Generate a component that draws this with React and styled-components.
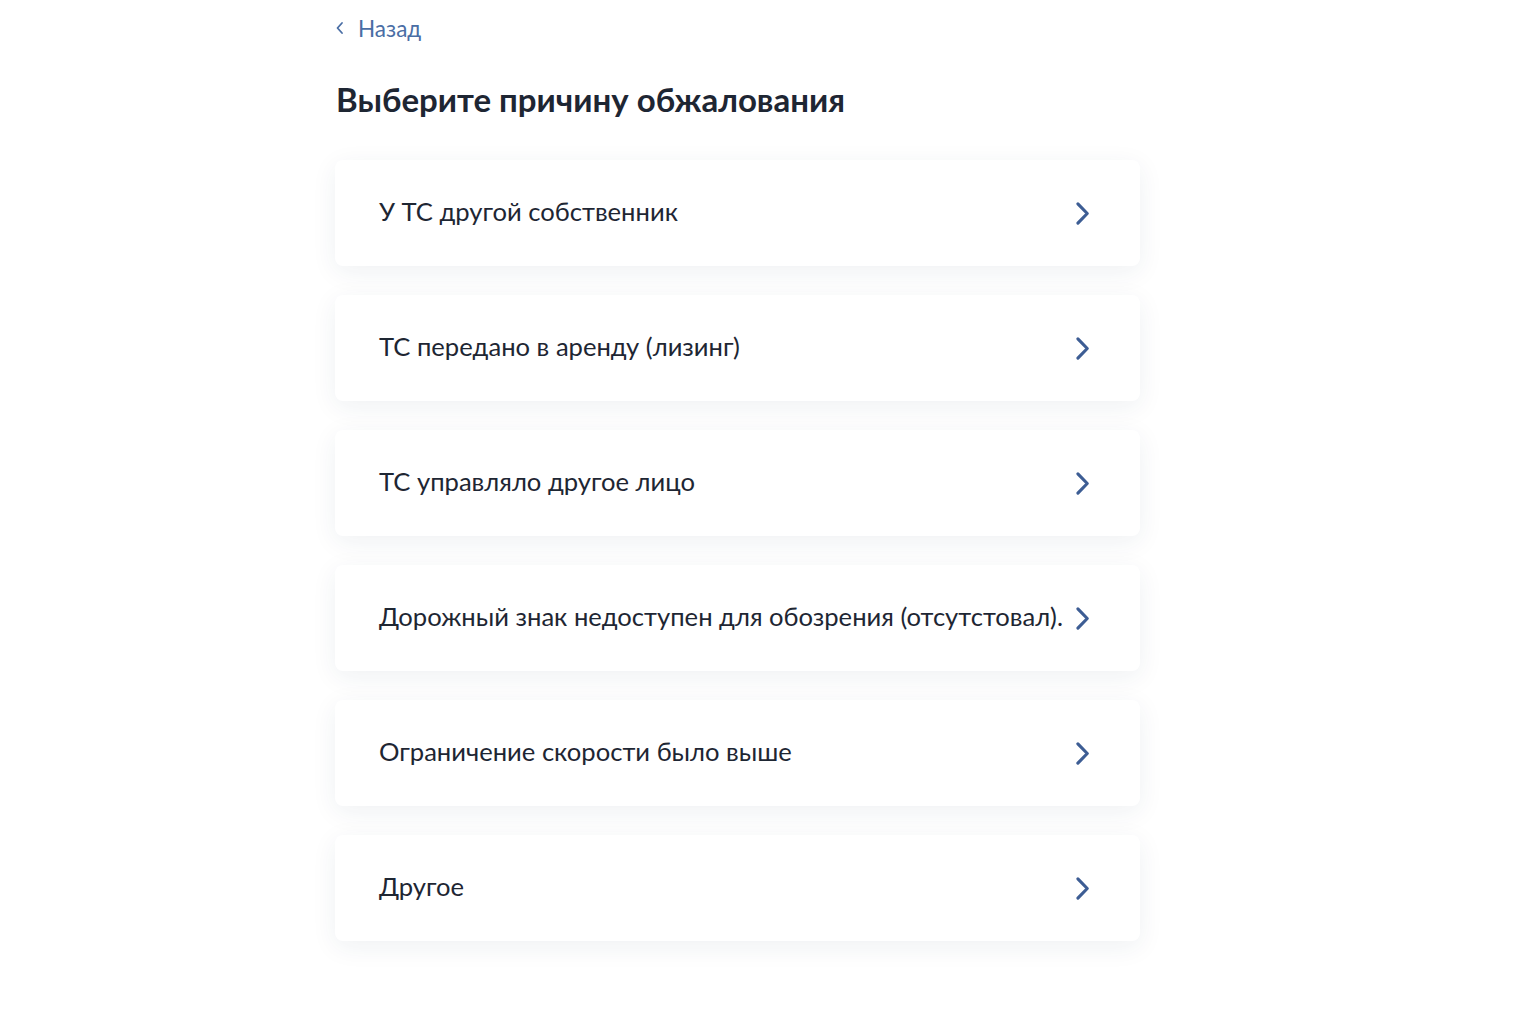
import React from "react";
import styled, { createGlobalStyle } from "styled-components";

const GlobalStyle = createGlobalStyle`
	body {
		margin: 0;
		background: #ffffff;
		font-family: Lato, "Noto Sans", "Liberation Sans", sans-serif;
	}
`;

const Page = styled.div`
	padding: 13px 0 60px 335px;
	width: 805px;
`;

const BackLink = styled.a`
	display: inline-flex;
	align-items: center;
	gap: 13px;
	color: #4a6ea5;
	font-size: 22.5px;
	text-decoration: none;
	cursor: pointer;
	height: 30px;
`;

const Title = styled.h1`
	margin: 36px 0 0 1px;
	font-size: 33px;
	font-weight: 700;
	color: #1e2633;
	line-height: 40px;
`;

const List = styled.div`
	display: flex;
	flex-direction: column;
	gap: 29px;
	margin-top: 41px;
`;

const Card = styled.button`
	display: flex;
	align-items: center;
	justify-content: space-between;
	gap: 5px;
	height: 106px;
	padding: 0 50px 0 44px;
	background: #ffffff;
	border: none;
	border-radius: 8px;
	box-shadow: 0 6px 26px rgba(30, 50, 80, 0.07);
	font-family: inherit;
	font-size: 25.6px;
	line-height: 32px;
	color: #1e2633;
	text-align: left;
	cursor: pointer;
`;

const Label = styled.span`
	padding-bottom: 5px;
	white-space: nowrap;
`;

const ChevronSvg = styled.svg`
	flex-shrink: 0;
`;

const Chevron = ({ color = "#3d5d94" }) => (
	<ChevronSvg width="15" height="25" viewBox="5.5 2 9.5 16" fill="none">
		<path d="M7.3 3.8 L13.3 10 L7.3 16.2" stroke={color} strokeWidth="2" strokeLinecap="round" strokeLinejoin="round" />
	</ChevronSvg>
);

const SmallChevron = () => (
	<svg width="10" height="14" viewBox="0 0 10 14" fill="none">
		<path d="M7 2 L2.5 7 L7 12" stroke="#4a6ea5" strokeWidth="1.8" strokeLinecap="round" strokeLinejoin="round" />
	</svg>
);

const reasons = [
	"У ТС другой собственник",
	"ТС передано в аренду (лизинг)",
	"ТС управляло другое лицо",
	"Дорожный знак недоступен для обозрения (отсутстовал).",
	"Ограничение скорости было выше",
	"Другое",
];

export default function App() {
	return (
		<>
			<GlobalStyle />
			<Page>
				<BackLink>
					<SmallChevron />
					Назад
				</BackLink>
				<Title>Выберите причину обжалования</Title>
				<List>
					{reasons.map((r) => (
						<Card key={r}>
							<Label>{r}</Label>
							<Chevron />
						</Card>
					))}
				</List>
			</Page>
		</>
	);
}
